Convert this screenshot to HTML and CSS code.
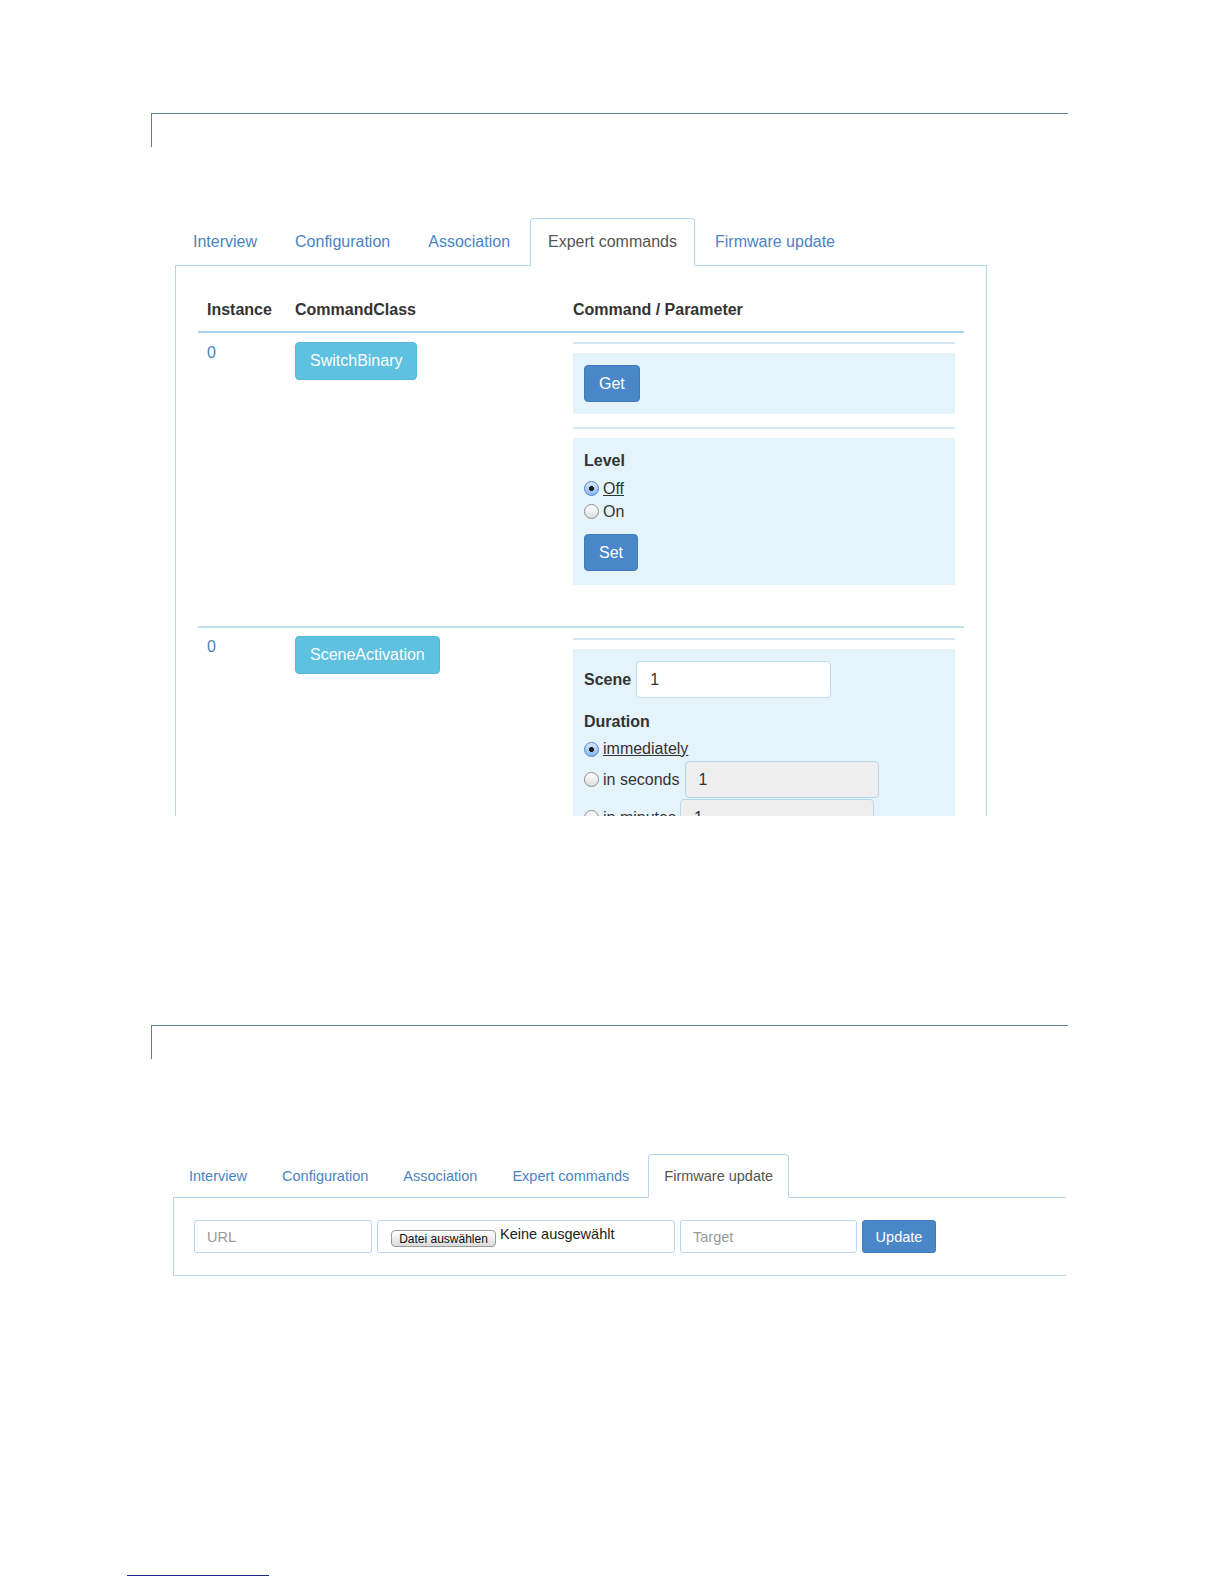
FILE: index.html
```html
<!DOCTYPE html>
<html lang="en">
<head>
<meta charset="utf-8">
<title>Expert commands / Firmware update</title>
<link rel="stylesheet" href="styles.css">
</head>
<body>
<div class="page">
  <div class="frame frame-top"></div>

  <div class="shot shot-a">
    <ul class="tabs tabs-a">
      <li class="tab">Interview</li>
      <li class="tab">Configuration</li>
      <li class="tab">Association</li>
      <li class="tab active">Expert commands</li>
      <li class="tab">Firmware update</li>
    </ul>
    <div class="panel panel-a">
      <div class="trow thead">
        <div class="cell">Instance</div>
        <div class="cell">CommandClass</div>
        <div class="cell">Command / Parameter</div>
      </div>

      <div class="trow r1">
        <div class="cell inst">0</div>
        <div class="cell"><span class="btn btn-info">SwitchBinary</span></div>
        <div class="cell cmds">
          <div class="cmd">
            <div class="box"><span class="btn btn-primary">Get</span></div>
          </div>
          <div class="cmd">
            <div class="box">
              <div class="lbl">Level</div>
              <div class="radios">
                <div class="opt"><span class="radio on"></span><span class="u">Off</span></div>
                <div class="opt"><span class="radio"></span><span>On</span></div>
              </div>
              <span class="btn btn-primary btn-set">Set</span>
            </div>
          </div>
        </div>
      </div>

      <div class="trow r2">
        <div class="cell inst">0</div>
        <div class="cell"><span class="btn btn-info">SceneActivation</span></div>
        <div class="cell cmds">
          <div class="cmd">
            <div class="box">
              <div class="inline-row">
                <span class="lbl">Scene</span>
                <span class="inp">1</span>
              </div>
              <div class="lbl dur">Duration</div>
              <div class="opt opt-first"><span class="radio on"></span><span class="u">immediately</span></div>
              <div class="opt opt-input"><span class="radio"></span><span class="opt-text">in seconds</span><span class="inp disabled">1</span></div>
              <div class="opt opt-input"><span class="radio"></span><span class="opt-text opt-min">in minutes</span><span class="inp disabled">1</span></div>
            </div>
          </div>
        </div>
      </div>
    </div>
  </div>

  <div class="frame frame-bottom"></div>

  <div class="shot shot-b">
    <ul class="tabs tabs-b">
      <li class="tab">Interview</li>
      <li class="tab">Configuration</li>
      <li class="tab">Association</li>
      <li class="tab">Expert commands</li>
      <li class="tab active">Firmware update</li>
    </ul>
    <div class="panel panel-b">
      <div class="field f-url">URL</div>
      <div class="field f-file"><span class="file-btn">Datei auswählen</span><span class="file-name">Keine ausgewählt</span></div>
      <div class="field f-target">Target</div>
      <div class="btn-update">Update</div>
    </div>
  </div>

  <div class="footnote"></div>
</div>
</body>
</html>
```
FILE: styles.css
```css
* { box-sizing: border-box; }

body {
  margin: 0;
  background: #fff;
  color: #333;
  font-family: "Liberation Sans", Arial, Helvetica, sans-serif;
}

.page { width: 1224px; }

/* thin document frames */
.frame {
  margin-left: 151px;
  width: 917px;
  height: 34px;
  border-top: 1px solid #5f7f99;
  border-left: 1px solid #5f7f99;
}
.frame-top { margin-top: 113px; }
.frame-bottom { margin-top: 209px; }

/* screenshot containers */
.shot { overflow: hidden; }
.shot-a {
  margin-left: 175px;
  margin-top: 71px;
  width: 812px;
  height: 598px;
  font-size: 16px;
}
.shot-b {
  margin-left: 173px;
  margin-top: 95px;
  width: 893px;
  font-size: 14.5px;
}

/* tabs */
.tabs {
  display: flex;
  list-style: none;
  margin: 0;
  padding: 0;
  border-bottom: 1px solid #b3d8ee;
}
.tab {
  margin-bottom: -1px;
  border: 1px solid transparent;
  border-radius: 4px 4px 0 0;
  color: #4a84c4;
  white-space: nowrap;
}
.tab.active {
  border-color: #b3d8ee;
  border-bottom-color: transparent;
  background: #fff;
  color: #555;
}
.tabs-a .tab {
  margin-right: 2px;
  padding: 12px 17px;
  line-height: 22px;
}
.tabs-b .tab {
  margin-right: 3px;
  padding: 11px 15px;
  line-height: 20px;
}

/* panel A */
.panel {
  border: 1px solid #b3d8ee;
  border-top: none;
}
.panel-a {
  padding: 24px 22px 22px;
  height: 900px;
}

.trow {
  display: grid;
  grid-template-columns: 88px 278px 1fr;
}
.cell {
  padding: 9px;
  line-height: 22px;
}
.thead {
  font-weight: bold;
  border-bottom: 2px solid #a9d3ec;
}
.thead .cell { padding-bottom: 10px; color: #333; }
.r1 { border-bottom: 2px solid #c0e0f1; }
.r1 .cmds { padding-bottom: 28px; }
.r2 .cell { padding-top: 8px; }
.r2 .cmds { padding-top: 10px; }

.inst { color: #4a84c4; }

.btn {
  display: inline-flex;
  align-items: center;
  justify-content: center;
  color: #fff;
  border-radius: 4px;
  white-space: nowrap;
}
.btn-info {
  height: 38px;
  padding: 0 14px;
  background: #5ec1df;
  border: 1px solid #55b8d8;
}
.btn-primary {
  height: 37px;
  padding: 0 14px;
  background: #4a87c9;
  border: 1px solid #3f7dbf;
}

.cmd {
  border-top: 2px solid #d3e9f5;
  padding-top: 9px;
  margin-bottom: 13px;
}
.box {
  background: #e5f4fb;
  padding: 12px 11px;
}
.lbl {
  font-weight: bold;
  line-height: 22px;
  color: #333;
}
.radios { margin-top: 5px; }
.opt {
  display: flex;
  align-items: center;
  height: 23px;
  color: #333;
}
.u { text-decoration: underline; }
.radio {
  display: inline-block;
  width: 15px;
  min-width: 15px;
  height: 15px;
  margin-right: 4px;
  border-radius: 50%;
  border: 1px solid #8e8e8e;
  background: linear-gradient(#ffffff, #dedede);
  flex: none;
}
.radio.on {
  border-color: #5486c6;
  background:
    radial-gradient(circle, #1d1d1d 0 2.2px, transparent 2.8px),
    linear-gradient(#d6e8fb, #86b6ec);
}
.btn-set { margin-top: 11px; margin-bottom: 2px; }

.inline-row {
  display: flex;
  align-items: center;
  gap: 5px;
}
.inp {
  display: flex;
  align-items: center;
  width: 195px;
  height: 37px;
  padding-left: 13px;
  background: #fff;
  border: 1px solid #bcdcee;
  border-radius: 4px;
  color: #333;
}
.inp.disabled {
  width: 194px;
  background: #eeeeee;
  border-color: #b6d7ea;
}
.dur { margin-top: 13px; }
.opt-first { margin-top: 5px; height: 22px; }
.opt-input { height: 37px; margin-top: 1px; }
.opt-text { margin-right: 5px; }
.opt-min { margin-right: 4px; }

/* panel B */
.panel-b {
  width: 960px;
  display: flex;
  padding: 22px 20px;
}
.field {
  display: flex;
  align-items: center;
  height: 33px;
  margin-right: 5px;
  background: #fff;
  border: 1px solid #b5d8ec;
  border-radius: 3px;
  color: #9a9a9a;
  padding-left: 12px;
}
.f-url { width: 178px; }
.f-file { width: 298px; padding-left: 13px; color: #222; }
.f-target { width: 177px; }
.file-btn {
  display: inline-flex;
  align-items: center;
  justify-content: center;
  height: 17px;
  width: 105px;
  margin-top: 4px;
  margin-right: 4px;
  font-size: 12px;
  color: #111;
  border: 1px solid #9a9a9a;
  border-radius: 4px;
  background: linear-gradient(#ffffff, #dcdcdc);
}
.file-name { margin-bottom: 5px; }
.btn-update {
  display: flex;
  align-items: center;
  justify-content: center;
  width: 74px;
  height: 33px;
  background: #4a87c9;
  border: 1px solid #3f7dbf;
  border-radius: 3px;
  color: #fff;
}

.footnote {
  margin-top: 299px;
  margin-left: 127px;
  width: 142px;
  border-top: 1px solid #22288a;
}
```
